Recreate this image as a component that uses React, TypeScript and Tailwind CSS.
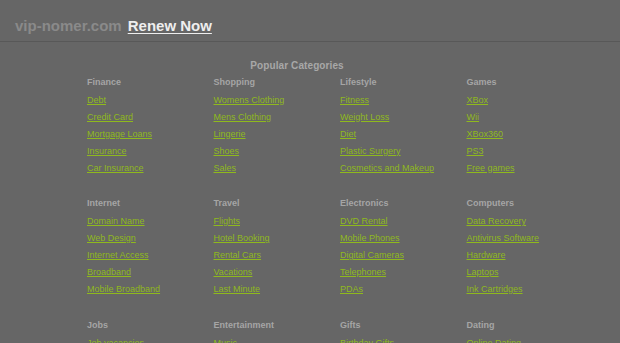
const sections: { title: string; links: string[] }[][] = [
  [
    { title: "Finance", links: ["Debt", "Credit Card", "Mortgage Loans", "Insurance", "Car Insurance"] },
    { title: "Shopping", links: ["Womens Clothing", "Mens Clothing", "Lingerie", "Shoes", "Sales"] },
    { title: "Lifestyle", links: ["Fitness", "Weight Loss", "Diet", "Plastic Surgery", "Cosmetics and Makeup"] },
    { title: "Games", links: ["XBox", "Wii", "XBox360", "PS3", "Free games"] },
  ],
  [
    { title: "Internet", links: ["Domain Name", "Web Design", "Internet Access", "Broadband", "Mobile Broadband"] },
    { title: "Travel", links: ["Flights", "Hotel Booking", "Rental Cars", "Vacations", "Last Minute"] },
    { title: "Electronics", links: ["DVD Rental", "Mobile Phones", "Digital Cameras", "Telephones", "PDAs"] },
    { title: "Computers", links: ["Data Recovery", "Antivirus Software", "Hardware", "Laptops", "Ink Cartridges"] },
  ],
  [
    { title: "Jobs", links: ["Job vacancies", "Careers", "Resume", "Employment", "Part time jobs"] },
    { title: "Entertainment", links: ["Music", "Movies", "Concerts", "Tickets", "Celebrity"] },
    { title: "Gifts", links: ["Birthday Gifts", "Flowers", "Gift Cards", "Wedding Gifts", "Jewelry"] },
    { title: "Dating", links: ["Online Dating", "Singles", "Personals", "Chat", "Matchmaking"] },
  ],
];

export default function App() {
  return (
    <div className="h-[343px] w-[620px] overflow-hidden bg-[#666666] font-['Liberation_Sans',Arial,sans-serif]">
      <header className="flex h-[42px] items-start border-b border-[#585858] px-[15px] pt-[17px] text-[15px] font-bold leading-[17px]">
        <span className="text-[#8a8a8a]">vip-nomer.com</span>
        <a href="#" className="ml-[6px] text-[#eeeeee] underline underline-offset-2">
          Renew Now
        </a>
      </header>

      <h1 className="mt-[18px] pr-[26px] text-center text-[10px] font-bold leading-[12px] tracking-[0.1px] text-[#a8a8a8]">
        Popular Categories
      </h1>

      <div className="ml-[87px] mt-[1.5px] flex flex-col gap-[18.5px]">
        {sections.map((row, i) => (
          <div key={i} className="grid grid-cols-[126.5px_126.5px_126.5px_126.5px]">
            {row.map((cat) => (
              <div key={cat.title}>
                <h2 className="text-[9px] font-bold leading-[17px] text-[#a5a5a5]">{cat.title}</h2>
                <ul className="mt-[1px]">
                  {cat.links.map((l) => (
                    <li key={l} className="text-[9px] leading-[17px]">
                      <a href="#" className="text-[#8fb91d] underline">
                        {l}
                      </a>
                    </li>
                  ))}
                </ul>
              </div>
            ))}
          </div>
        ))}
      </div>
    </div>
  );
}
